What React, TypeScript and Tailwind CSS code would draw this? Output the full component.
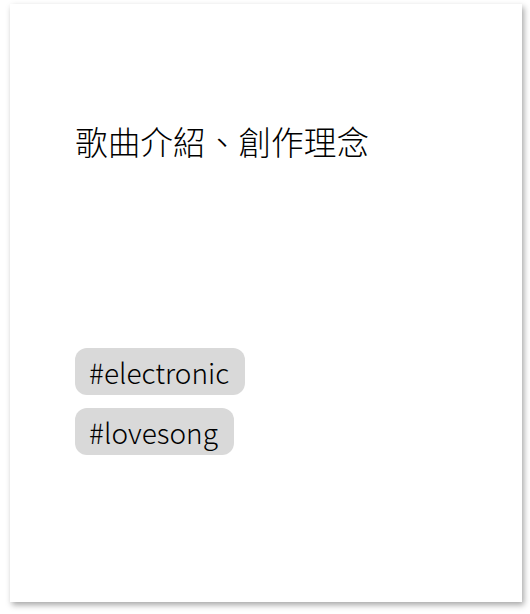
export default function App() {
  return (
    <div className="w-[530px] h-[614px] bg-white pt-[4px] pl-[10px]" style={{ fontFamily: '"Noto Sans CJK TC", "Noto Sans", sans-serif' }}>
      <div className="w-[512px] h-[598px] bg-white shadow-[2px_3px_6px_rgba(0,0,0,0.35)] pl-[65px] pt-[113px] flex flex-col">
        <h1 className="text-[32.7px] leading-[48px] text-black font-light">歌曲介紹、創作理念</h1>
        <div className="mt-[183px] flex flex-col items-start gap-[13px]">
          <span className="bg-[#d9d9d9] rounded-[12px] pl-[14px] pr-[16px] h-[47px] flex items-center text-[28px] font-light text-black">#electronic</span>
          <span className="bg-[#d9d9d9] rounded-[12px] pl-[14px] pr-[16px] h-[47px] flex items-center text-[28px] font-light text-black">#lovesong</span>
        </div>
      </div>
    </div>
  );
}
